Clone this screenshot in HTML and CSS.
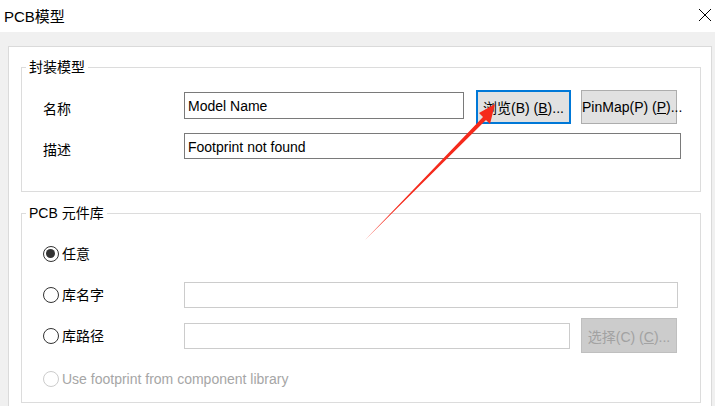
FILE: index.html
```html
<!DOCTYPE html>
<html lang="zh">
<head>
<meta charset="utf-8">
<title>PCB模型</title>
<link rel="stylesheet" href="styles.css">
</head>
<body>
<div class="window">
  <div class="titlebar">
    <span class="title">PCB模型</span>
    <svg class="close" width="14" height="14" viewBox="0 0 14 14"><path d="M1 1 L13 13 M13 1 L1 13" stroke="#000" stroke-width="1" fill="none"/></svg>
  </div>
  <div class="client">
    <div class="panel">
      <fieldset class="group group-model">
        <legend>封装模型</legend>
        <div class="group-body">
          <div class="row row-name">
            <span class="label">名称</span>
            <div class="input input-name">Model Name</div>
            <button class="btn btn-focus">浏览(B) (<u>B</u>)...</button>
            <button class="btn btn-pin">PinMap(P) (<u>P</u>)...</button>
          </div>
          <div class="row row-desc">
            <span class="label">描述</span>
            <div class="input input-desc">Footprint not found</div>
          </div>
        </div>
      </fieldset>
      <fieldset class="group group-lib">
        <legend>PCB 元件库</legend>
        <div class="group-body">
          <div class="opt opt-any">
            <span class="radio checked"></span><span class="opt-text">任意</span>
          </div>
          <div class="opt opt-libname">
            <span class="radio"></span><span class="opt-text">库名字</span>
            <div class="input input-off input-libname"></div>
          </div>
          <div class="opt opt-libpath">
            <span class="radio"></span><span class="opt-text">库路径</span>
            <div class="input input-off input-libpath"></div>
            <button class="btn btn-disabled">选择(C) (<u>C</u>)...</button>
          </div>
          <div class="opt opt-use disabled">
            <span class="radio"></span><span class="opt-text">Use footprint from component library</span>
          </div>
        </div>
      </fieldset>
    </div>
  </div>
  <svg class="arrow" width="715" height="406" viewBox="0 0 715 406">
    <polygon points="365,240 486,120 490,124 495,104 479,113 483,117" fill="#f52a1c"/>
  </svg>
</div>
</body>
</html>
```
FILE: styles.css
```css
* { box-sizing: border-box; }
html, body { margin: 0; padding: 0; }
body {
  width: 715px;
  height: 406px;
  overflow: hidden;
  background: #f0f0f0;
  font-family: "Liberation Sans", "Noto Sans CJK SC", sans-serif;
  font-size: 14px;
  color: #000;
}
.window { position: relative; width: 715px; height: 406px; }
.titlebar {
  height: 32px;
  background: #fff;
  display: flex;
  align-items: center;
  justify-content: space-between;
  padding: 0 3px 2px 4px;
}
.title { font-size: 15px; }
.client { padding: 14px 3px 0 8px; }
.panel {
  background: #fff;
  border: 1px solid #dadada;
  border-bottom: none;
  height: 380px;
  padding: 10px 10px 0 12px;
}
.group {
  margin: 0;
  border: 1px solid #dcdcdc;
  padding: 0;
  min-width: 0;
}
.group legend {
  margin-left: 4px;
  padding: 0 3px;
  font-size: 14px;
  line-height: 20px;
}
.group-body { padding-left: 21px; }
.group-model .group-body { padding-bottom: 32px; }
.row { display: flex; align-items: flex-start; }
.row-name { margin-top: 13px; height: 34px; }
.row-desc { margin-top: 9px; height: 26px; }
.label { width: 141px; flex: none; line-height: 20px; }
.row-name .label { padding-top: 9px; }
.row-desc .label { padding-top: 7px; }
.input {
  height: 27px;
  border: 1px solid #7a7a7a;
  padding: 1px 3px 0;
  line-height: 24px;
  white-space: nowrap;
}
.row-name .input { margin-top: 2px; }
.input-name { width: 280px; }
.input-desc { width: 497px; height: 26px; }
.btn {
  font-family: inherit;
  font-size: 14px;
  height: 34px;
  background: #e1e1e1;
  border: 1px solid #adadad;
  color: #000;
  padding: 0;
  margin: 0;
  flex: none;
  white-space: nowrap;
}
.btn-focus { width: 95px; margin-left: 12px; border: 2px solid #0078d7; }
.btn-pin { width: 96px; margin-left: 10px; }
.group-lib { margin-top: 11px; height: 200px; }
.opt { display: flex; align-items: center; }
.radio {
  flex: none;
  width: 16px;
  height: 16px;
  border: 1px solid #333;
  border-radius: 50%;
  background: #fff;
  position: relative;
  margin-right: 3px;
}
.radio.checked { border-width: 1.5px; }
.radio.checked::after {
  content: "";
  position: absolute;
  left: 2px; top: 2px;
  width: 9px; height: 9px;
  border-radius: 50%;
  background: #333;
}
.opt-text { line-height: 20px; }
.opt-libname .opt-text, .opt-libpath .opt-text { width: 122px; }
.opt-any { margin-top: 18px; height: 26px; }
.opt-libname { margin-top: 15px; height: 26px; }
.opt-libpath { margin-top: 10px; height: 35px; }
.opt-use { margin-top: 16px; height: 20px; }
.input-off { border-color: #cccccc; height: 26px; }
.input-libname { width: 494px; }
.input-libpath { width: 386px; }
.btn-disabled {
  width: 96px;
  height: 35px;
  margin-left: 11px;
  background: #cccccc;
  border: 1px solid #bfbfbf;
  color: #a2a2a2;
}
.disabled .radio { border-color: #cccccc; }
.disabled .opt-text { color: #a6a6a6; }
.arrow { position: absolute; left: 0; top: 0; pointer-events: none; }
```
